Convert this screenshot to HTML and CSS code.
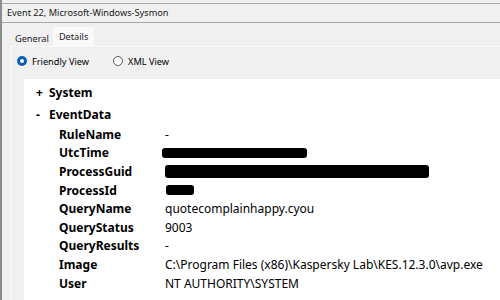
FILE: index.html
```html
<!DOCTYPE html>
<html>
<head>
<meta charset="utf-8">
<link rel="stylesheet" href="styles.css">
</head>
<body>
<div class="window">
  <div class="titlebar">Event 22, Microsoft-Windows-Sysmon</div>
  <div class="tabs">
    <div class="tab">General</div>
    <div class="tab active">Details</div>
  </div>
  <div class="panel">
    <div class="radios">
      <label class="radio"><span class="dot checked"></span>Friendly View</label>
      <label class="radio"><span class="dot"></span>XML View</label>
    </div>
    <div class="content">
      <div class="node"><span class="sign">+</span><span class="name">System</span></div>
      <div class="node"><span class="sign">-</span><span class="name">EventData</span></div>
      <div class="fields">
        <div class="row"><span class="key">RuleName</span><span class="val">-</span></div>
        <div class="row"><span class="key">UtcTime</span><span class="val"><span class="redact r-time"></span></span></div>
        <div class="row"><span class="key">ProcessGuid</span><span class="val"><span class="redact r-guid"></span></span></div>
        <div class="row"><span class="key">ProcessId</span><span class="val"><span class="redact r-pid"></span></span></div>
        <div class="row"><span class="key">QueryName</span><span class="val">quotecomplainhappy.cyou</span></div>
        <div class="row"><span class="key">QueryStatus</span><span class="val">9003</span></div>
        <div class="row"><span class="key">QueryResults</span><span class="val">-</span></div>
        <div class="row"><span class="key">Image</span><span class="val">C:\Program Files (x86)\Kaspersky Lab\KES.12.3.0\avp.exe</span></div>
        <div class="row"><span class="key">User</span><span class="val">NT AUTHORITY\SYSTEM</span></div>
      </div>
    </div>
  </div>
</div>
</body>
</html>
```
FILE: styles.css
```css
html, body {
  margin: 0;
  padding: 0;
  width: 500px;
  height: 300px;
  overflow: hidden;
  background: #f0f0f0;
  font-family: "Noto Sans", "Open Sans", sans-serif;
  color: #000;
}
.window {
  height: 300px;
  border-left: 2px solid #8c8c8c;
  box-sizing: border-box;
  display: flex;
  flex-direction: column;
}
.titlebar {
  margin-top: 3px;
  height: 18px;
  line-height: 18px;
  border-top: 1px solid #a8a8a8;
  border-bottom: 1px solid #a8a8a8;
  padding-left: 5px;
  font-size: 9.2px;
  color: #1a1a1a;
}
.tabs {
  display: flex;
  align-items: flex-end;
  height: 23px;
  padding-left: 8px;
}
.tab {
  height: 19px;
  line-height: 23px;
  padding: 0 4px 0 5px;
  font-size: 9.2px;
  color: #1a1a1a;
}
.tab.active {
  background: #f9f9f9;
  line-height: 20px;
  padding: 0 6px;
}
.panel {
  flex: 1;
  margin-left: 8px;
  border-top: 1px solid #fafafa;
  border-left: 1px solid #fafafa;
  display: flex;
  flex-direction: column;
}
.radios {
  display: flex;
  gap: 24px;
  height: 28px;
  align-items: center;
  padding-left: 6px;
  padding-bottom: 4px;
  font-size: 9.2px;
}
.radio {
  display: flex;
  align-items: center;
  gap: 5px;
}
.dot {
  width: 8px;
  height: 8px;
  border-radius: 50%;
  border: 1px solid #5a5a5a;
  background: #fff;
  box-sizing: content-box;
}
.dot.checked {
  border: 3px solid #0a5fb4;
  width: 4px;
  height: 4px;
}
.content {
  flex: 1;
  margin-left: 13px;
  background: #fff;
  padding-top: 2px;
  padding-left: 12px;
}
.node {
  display: flex;
  height: 22px;
  align-items: center;
  font-size: 12px;
  font-weight: bold;
}
.sign {
  width: 13px;
}
.fields {
  padding-left: 23px;
}
.row {
  display: flex;
  height: 18.6px;
  align-items: center;
  font-size: 12px;
}
.key {
  width: 106px;
  flex-shrink: 0;
  font-weight: bold;
}
.val {
  white-space: nowrap;
  display: flex;
  align-items: center;
}
.redact {
  display: block;
  background: #000;
  border-radius: 3px;
}
.r-time {
  width: 145px;
  height: 10px;
  margin-left: -3px;
}
.r-guid {
  width: 264px;
  height: 13px;
}
.r-pid {
  width: 28px;
  height: 10px;
  margin-left: 1px;
}
```
